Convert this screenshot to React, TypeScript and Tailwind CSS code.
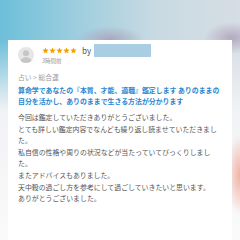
import React from 'react';

const review = {
  time: '3時間前',
  category: '占い > 総合運',
  title: '算命学であなたの『本質、才能、適職』鑑定します ありのままの自分を活かし、ありのままで生きる方法が分かります',
  // line breaks as they fall in the card
  body: [
    '今回は鑑定していただきありがとうございました。',
    'とても詳しい鑑定内容でなんども繰り返し読ませていただきまし',
    'た。',
    '私自信の性格や周りの状況などが当たっていてびっくりしまし',
    'た。',
    'またアドバイスもありました。',
    '天中殺の過ごし方を参考にして過ごしていきたいと思います。',
    'ありがとうございました。',
  ],
};

const Star = () => (
  <svg width="7" height="7" viewBox="0 0 24 24">
    <path d="M12 1.5l3.2 7 7.5.7-5.7 5 1.7 7.4L12 17.8 5.3 21.6 7 14.2l-5.7-5 7.5-.7z" fill="#f5a100" />
  </svg>
);

const Avatar = () => (
  <svg width="16" height="16" viewBox="0 0 32 32" className="shrink-0">
    <defs>
      <clipPath id="av">
        <circle cx="16" cy="16" r="16" />
      </clipPath>
    </defs>
    <circle cx="16" cy="16" r="16" fill="#e6e6e6" />
    <g clipPath="url(#av)" fill="#c6c6c6">
      <circle cx="16" cy="12.5" r="6" />
      <path d="M4 32c0-7 5.4-11.5 12-11.5S28 25 28 32z" />
    </g>
  </svg>
);

export default function App() {
  return (
    <div className="relative w-[240px] h-[240px] overflow-hidden font-['Noto_Sans_CJK_JP','Noto_Sans',sans-serif] bg-[image:radial-gradient(ellipse_34px_14px_at_110px_40px,#aaa6bc,transparent),radial-gradient(ellipse_28px_16px_at_232px_38px,#b3aac0,transparent),radial-gradient(ellipse_14px_40px_at_240px_175px,#f2b0a4,transparent),linear-gradient(to_bottom,transparent_0,transparent_40px,#f1f2f4_110px,#fafafa_240px),linear-gradient(to_right,#6dbfda_0%,#a2cfdf_35%,#c9dae3_65%,#d6dde4_100%)]">
      <div className="mx-2 mt-10 h-[200px] bg-white px-[10px] pt-1">
        <div className="flex items-center gap-2">
          <Avatar />
          <div className="flex flex-col">
            <div className="flex items-center">
              <div className="flex">
                <Star />
                <Star />
                <Star />
                <Star />
                <Star />
              </div>
              <span className="ml-[5px] text-[8px] leading-[13px] text-[#555]">by</span>
              <div className="ml-[3px] w-[57px] h-[13px] bg-[#a9cde2]" />
            </div>
            <div className="text-[5.5px] leading-[8px] text-[#999]">{review.time}</div>
          </div>
        </div>
        <div className="mt-[7px] text-[6.8px] leading-[10px] text-[#999]">{review.category}</div>
        <div className="mt-[3px] text-[6.9px] leading-[11px] font-bold text-[#2a86d0]">{review.title}</div>
        <div className="mt-[5px] text-[6.9px] leading-[11.6px] text-[#555]">
          {review.body.map((line, i) => (
            <p key={i} className="whitespace-nowrap">{line}</p>
          ))}
        </div>
      </div>
    </div>
  );
}
